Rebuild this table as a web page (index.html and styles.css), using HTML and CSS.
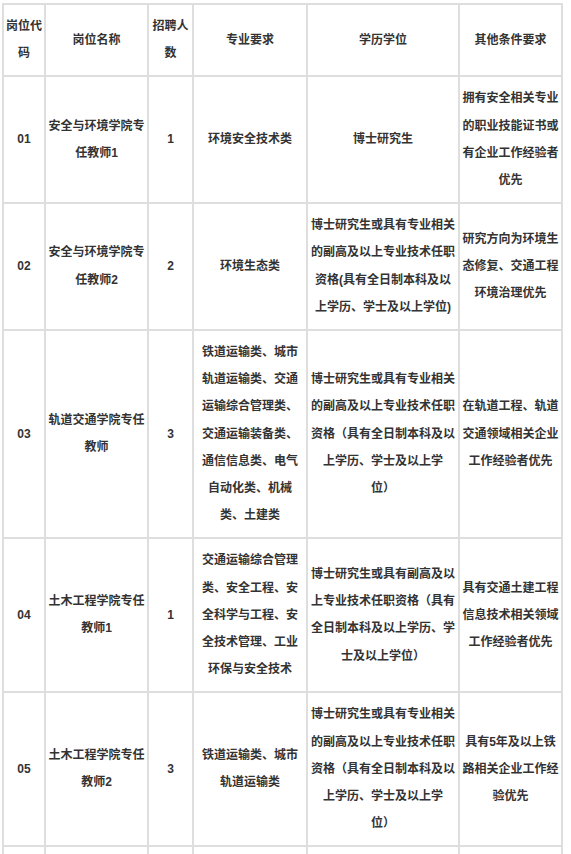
FILE: index.html
```html
<!DOCTYPE html>
<html lang="zh-CN">
<head>
<meta charset="utf-8">
<title>岗位表</title>
<link rel="stylesheet" href="styles.css">
</head>
<body>
<div class="wrap">
  <div class="grid">
    <div class="cell">岗位代码</div>
    <div class="cell">岗位名称</div>
    <div class="cell">招聘人数</div>
    <div class="cell major">专业要求</div>
    <div class="cell">学历学位</div>
    <div class="cell">其他条件要求</div>

    <div class="cell">01</div>
    <div class="cell">安全与环境学院专任教师1</div>
    <div class="cell">1</div>
    <div class="cell major">环境安全技术类</div>
    <div class="cell">博士研究生</div>
    <div class="cell">拥有安全相关专业的职业技能证书或有企业工作经验者优先</div>

    <div class="cell">02</div>
    <div class="cell">安全与环境学院专任教师2</div>
    <div class="cell">2</div>
    <div class="cell major">环境生态类</div>
    <div class="cell">博士研究生或具有专业相关的副高及以上专业技术任职资格(具有全日制本科及以上学历、学士及以上学位)</div>
    <div class="cell">研究方向为环境生态修复、交通工程环境治理优先</div>

    <div class="cell">03</div>
    <div class="cell">轨道交通学院专任教师</div>
    <div class="cell">3</div>
    <div class="cell major">铁道运输类、城市轨道运输类、交通运输综合管理类、交通运输装备类、通信信息类、电气自动化类、机械类、土建类</div>
    <div class="cell">博士研究生或具有专业相关的副高及以上专业技术任职资格（具有全日制本科及以上学历、学士及以上学<br>位）</div>
    <div class="cell">在轨道工程、轨道交通领域相关企业工作经验者优先</div>

    <div class="cell">04</div>
    <div class="cell">土木工程学院专任教师1</div>
    <div class="cell">1</div>
    <div class="cell major">交通运输综合管理类、安全工程、安全科学与工程、安全技术管理、工业环保与安全技术</div>
    <div class="cell">博士研究生或具有副高及以上专业技术任职资格（具有全日制本科及以上学历、学士及以上学位）</div>
    <div class="cell">具有交通土建工程信息技术相关领域工作经验者优先</div>

    <div class="cell">05</div>
    <div class="cell">土木工程学院专任教师2</div>
    <div class="cell">3</div>
    <div class="cell major">铁道运输类、城市轨道运输类</div>
    <div class="cell">博士研究生或具有专业相关的副高及以上专业技术任职资格（具有全日制本科及以上学历、学士及以上学<br>位）</div>
    <div class="cell">具有5年及以上铁路相关企业工作经验优先</div>

    <div class="cell blank"></div>
    <div class="cell blank"></div>
    <div class="cell blank"></div>
    <div class="cell blank major"></div>
    <div class="cell blank"></div>
    <div class="cell blank"></div>
  </div>
</div>
</body>
</html>
```

FILE: styles.css
```css
html, body {
  margin: 0;
  padding: 0;
  background: #ffffff;
  overflow: hidden;
}

.wrap {
  padding: 3px 0 0 2px;
}

.grid {
  display: grid;
  grid-template-columns: 42px 103px 45px 114px 152px 103px;
  border-top: 2px solid #dedede;
  border-left: 2px solid #dedede;
  width: max-content;
  font-family: "Liberation Sans", "Noto Sans CJK SC", sans-serif;
  font-size: 12px;
  font-weight: bold;
  color: #333333;
}

.cell {
  box-sizing: border-box;
  border-right: 2px solid #dedede;
  border-bottom: 2px solid #dedede;
  padding: 8px 2px 8px 2px;
  line-height: 27.2px;
  text-align: center;
  display: flex;
  flex-direction: column;
  justify-content: center;
}

.major {
  padding-left: 4px;
  padding-right: 4px;
}

.blank {
  min-height: 12px;
  padding: 0;
}
```
